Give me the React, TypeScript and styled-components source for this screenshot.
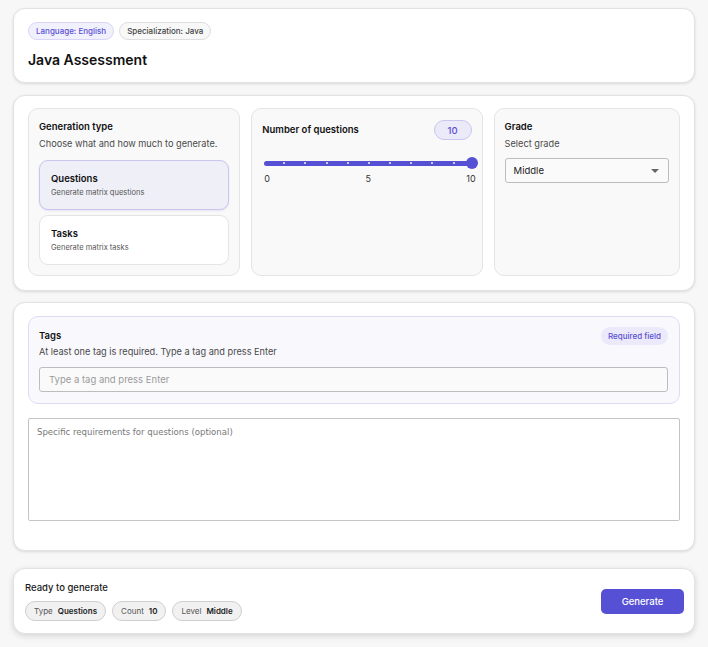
import React from "react";
import styled, { createGlobalStyle } from "styled-components";

const Global = createGlobalStyle`
  html, body { margin: 0; padding: 0; background: #f7f7f7; }
  body { font-family: Inter, "Noto Sans", sans-serif; color: #1a1a1a; }
  * { box-sizing: border-box; }
`;

const Page = styled.div`
  padding: 8px 13px 14px 13px;
  display: flex;
  flex-direction: column;
`;

const Card = styled.section<{ $mt?: number; $pt?: number; $pb?: number }>`
  background: #fff;
  border: 1px solid #e2e2e2;
  border-radius: 12px;
  box-shadow: 0 1px 3px rgba(0, 0, 0, 0.12);
  padding: ${(p) => p.$pt ?? 13}px 14px ${(p) => p.$pb ?? 14}px 14px;
  margin-top: ${(p) => p.$mt ?? 0}px;
`;

const ChipRow = styled.div`
  display: flex;
  gap: 5px;
`;

const Chip = styled.span<{ $accent?: boolean }>`
  display: inline-flex;
  align-items: center;
  height: 18px;
  padding: 0 7px;
  border-radius: 9px;
  font-size: 8px;
  font-weight: 500;
  background: ${(p) => (p.$accent ? "#f1f0fd" : "#f8f8f8")};
  border: 1px solid ${(p) => (p.$accent ? "#d9d5f6" : "#dedede")};
  color: ${(p) => (p.$accent ? "#5a4fd3" : "#3f3f3f")};
`;

const Title = styled.h1`
  margin: 10px 0 0 0;
  font-size: 14px;
  line-height: 20px;
  font-weight: 600;
  color: #111;
`;

const Grid = styled.div`
  display: grid;
  grid-template-columns: 213fr 232fr 187fr;
  gap: 11px;
`;

const Panel = styled.div<{ $tint?: boolean }>`
  background: ${(p) => (p.$tint ? "#f8f8fd" : "#f9f9f9")};
  border: 1px solid ${(p) => (p.$tint ? "#dedbf4" : "#e4e4e4")};
  border-radius: 10px;
  padding: 11px 10px 10px 10px;
  min-height: 168px;
`;

const PanelTitle = styled.div`
  font-size: 9.5px;
  font-weight: 600;
  line-height: 14px;
  color: #111;
`;

const PanelDesc = styled.div<{ $mt?: number }>`
  font-size: 9.2px;
  line-height: 14px;
  margin-top: ${(p) => p.$mt ?? 3}px;
  color: #4a4a4a;
`;

const Options = styled.div`
  display: flex;
  flex-direction: column;
  gap: 5px;
  margin-top: 9px;
`;

const Option = styled.div<{ $active?: boolean }>`
  height: 50px;
  border-radius: 9px;
  padding: 11px 11px;
  background: ${(p) => (p.$active ? "#efeff7" : "#fff")};
  border: 1px solid ${(p) => (p.$active ? "#c9c5ef" : "#e4e4e4")};
  box-shadow: ${(p) => (p.$active ? "0 1px 2px rgba(90,80,210,0.12)" : "none")};
`;

const OptionTitle = styled.div`
  font-size: 9.5px;
  font-weight: 600;
  color: #111;
  line-height: 13px;
`;

const OptionSub = styled.div`
  font-size: 7.5px;
  color: #555;
  margin-top: 3px;
`;

const HeadRow = styled.div`
  display: flex;
  justify-content: space-between;
  align-items: center;
`;

const CountBadge = styled.span`
  display: inline-flex;
  align-items: center;
  justify-content: center;
  width: 38px;
  height: 20px;
  border-radius: 10px;
  background: #ebeaf9;
  border: 1px solid #cac6ef;
  color: #5a4fd3;
  font-size: 9.5px;
  font-weight: 500;
`;

const Slider = styled.div`
  position: relative;
  height: 12px;
  margin: 17px 0 0 2px;
  display: flex;
  align-items: center;
`;

const Track = styled.div`
  flex: 1;
  height: 5px;
  border-radius: 3px;
  background: #5651d4;
  display: flex;
  justify-content: space-between;
  align-items: center;
  padding: 0 17px 0 19px;
`;

const Tick = styled.span`
  width: 2px;
  height: 1.5px;
  background: rgba(255, 255, 255, 0.7);
`;

const Thumb = styled.span`
  position: absolute;
  right: -6px;
  top: 0;
  width: 12px;
  height: 12px;
  border-radius: 50%;
  background: #5651d4;
`;

const Scale = styled.div`
  display: flex;
  justify-content: space-between;
  margin-top: 4px;
  font-size: 9px;
  color: #333;
  padding: 0 0 0 2px;
  margin-right: -4px;
`;

const Select = styled.div`
  margin-top: 7px;
  height: 25px;
  border: 1px solid #bdbdbd;
  border-radius: 3px;
  background: #fafafa;
  display: flex;
  align-items: center;
  justify-content: space-between;
  padding: 0 9px 0 8px;
  font-size: 9.5px;
  color: #222;
`;

const Caret = styled.span`
  width: 0;
  height: 0;
  border-left: 4px solid transparent;
  border-right: 4px solid transparent;
  border-top: 4px solid #666;
`;

const TagsPanel = styled(Panel)`
  min-height: 0;
  padding: 10px 11px 11px 10px;
`;

const ReqBadge = styled.span`
  display: inline-flex;
  align-items: center;
  height: 18px;
  padding: 0 7px;
  border-radius: 9px;
  background: #ebe9fa;
  color: #5a4fd3;
  font-size: 8px;
  font-weight: 500;
`;

const TagInput = styled.input`
  display: block;
  width: 100%;
  height: 25px;
  margin-top: 8px;
  border: 1px solid #bdbdbd;
  border-radius: 3px;
  background: #fafafa;
  padding: 0 9px;
  font-family: Inter, sans-serif;
  font-size: 9.5px;
  &::placeholder { color: #9a9a9a; }
`;

const TextArea = styled.textarea`
  display: block;
  width: 100%;
  height: 103px;
  margin: 14px 0 15px 0;
  border: 1px solid #c4c4c4;
  border-radius: 2px;
  padding: 7px 8px;
  resize: none;
  font-family: "DejaVu Sans Condensed", "Liberation Sans", sans-serif;
  font-size: 9.5px;
  &::placeholder { color: #777; }
`;

const Footer = styled(Card)`
  padding: 12px 10px 12px 11px;
  box-shadow: 0 2px 6px rgba(0, 0, 0, 0.14);
  display: flex;
  align-items: center;
  justify-content: space-between;
`;

const FooterTitle = styled.div`
  font-size: 9.5px;
  font-weight: 500;
  color: #1a1a1a;
  line-height: 14px;
`;

const Summary = styled.div`
  display: flex;
  gap: 6px;
  margin-top: 6px;
`;

const SumChip = styled.span`
  display: inline-flex;
  align-items: center;
  gap: 5px;
  height: 20px;
  padding: 0 8px;
  border-radius: 10px;
  background: #f1f1f1;
  border: 1px solid #cfcfcf;
  font-size: 8px;
  color: #555;
  b { color: #222; font-weight: 600; }
`;

const Button = styled.button`
  width: 83px;
  height: 25px;
  border: none;
  border-radius: 5px;
  background: #5651d4;
  color: #fff;
  font-family: Inter, sans-serif;
  font-size: 9.5px;
  font-weight: 500;
`;

export default function App() {
  return (
    <>
      <Global />
      <Page>
        <Card $pb={12}>
          <ChipRow>
            <Chip $accent>Language: English</Chip>
            <Chip>Specialization: Java</Chip>
          </ChipRow>
          <Title>Java Assessment</Title>
        </Card>

        <Card $mt={12} $pt={12}>
          <Grid>
            <Panel>
              <PanelTitle>Generation type</PanelTitle>
              <PanelDesc>Choose what and how much to generate.</PanelDesc>
              <Options>
                <Option $active>
                  <OptionTitle>Questions</OptionTitle>
                  <OptionSub>Generate matrix questions</OptionSub>
                </Option>
                <Option>
                  <OptionTitle>Tasks</OptionTitle>
                  <OptionSub>Generate matrix tasks</OptionSub>
                </Option>
              </Options>
            </Panel>
            <Panel>
              <HeadRow>
                <PanelTitle>Number of questions</PanelTitle>
                <CountBadge>10</CountBadge>
              </HeadRow>
              <Slider>
                <Track>
                  {Array.from({ length: 9 }).map((_, i) => (
                    <Tick key={i} />
                  ))}
                </Track>
                <Thumb />
              </Slider>
              <Scale>
                <span>0</span>
                <span>5</span>
                <span>10</span>
              </Scale>
            </Panel>
            <Panel>
              <PanelTitle>Grade</PanelTitle>
              <PanelDesc>Select grade</PanelDesc>
              <Select>
                <span>Middle</span>
                <Caret />
              </Select>
            </Panel>
          </Grid>
        </Card>

        <Card $mt={11} $pt={13}>
          <TagsPanel $tint>
            <HeadRow>
              <PanelTitle>Tags</PanelTitle>
              <ReqBadge>Required field</ReqBadge>
            </HeadRow>
            <PanelDesc $mt={0}>
              At least one tag is required. Type a tag and press Enter
            </PanelDesc>
            <TagInput placeholder="Type a tag and press Enter" />
          </TagsPanel>
          <TextArea placeholder="Specific requirements for questions (optional)" />
        </Card>

        <Footer $mt={17}>
          <div>
            <FooterTitle>Ready to generate</FooterTitle>
            <Summary>
              <SumChip>
                Type <b>Questions</b>
              </SumChip>
              <SumChip>
                Count <b>10</b>
              </SumChip>
              <SumChip>
                Level <b>Middle</b>
              </SumChip>
            </Summary>
          </div>
          <Button>Generate</Button>
        </Footer>
      </Page>
    </>
  );
}
